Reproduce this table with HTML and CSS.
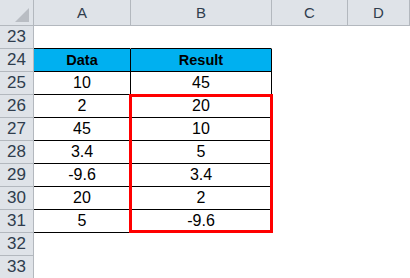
FILE: index.html
```html
<!DOCTYPE html>
<html>
<head>
<meta charset="utf-8">
<link rel="stylesheet" href="styles.css">
</head>
<body>
<div class="sheet">
  <div class="grid">
    <div class="hd corner"><span class="tri"></span></div>
    <div class="hd col">A</div>
    <div class="hd col">B</div>
    <div class="hd col">C</div>
    <div class="hd col">D</div>

    <div class="hd row">23</div>
    <div class="c above"></div><div class="c above"></div><div class="c"></div><div class="c"></div>

    <div class="hd row">24</div>
    <div class="c t th">Data</div><div class="c t th">Result</div><div class="c"></div><div class="c"></div>

    <div class="hd row">25</div>
    <div class="c t">10</div><div class="c t">45</div><div class="c"></div><div class="c"></div>

    <div class="hd row">26</div>
    <div class="c t">2</div><div class="c t">20</div><div class="c"></div><div class="c"></div>

    <div class="hd row">27</div>
    <div class="c t">45</div><div class="c t">10</div><div class="c"></div><div class="c"></div>

    <div class="hd row">28</div>
    <div class="c t">3.4</div><div class="c t">5</div><div class="c"></div><div class="c"></div>

    <div class="hd row">29</div>
    <div class="c t">-9.6</div><div class="c t">3.4</div><div class="c"></div><div class="c"></div>

    <div class="hd row">30</div>
    <div class="c t">20</div><div class="c t">2</div><div class="c"></div><div class="c"></div>

    <div class="hd row">31</div>
    <div class="c t">5</div><div class="c t">-9.6</div><div class="c"></div><div class="c"></div>

    <div class="hd row">32</div>
    <div class="c"></div><div class="c"></div><div class="c"></div><div class="c"></div>

    <div class="hd row">33</div>
    <div class="c"></div><div class="c"></div><div class="c"></div><div class="c"></div>
  </div>
  <div class="highlight"></div>
</div>
</body>
</html>
```
FILE: styles.css
```css
html, body {
  margin: 0;
  padding: 0;
  background: #fff;
  overflow: hidden;
}
.sheet {
  position: relative;
  width: 410px;
  height: 278px;
  overflow: hidden;
  font-family: "Liberation Sans", Arial, sans-serif;
  font-size: 16px;
  color: #000;
}
.grid {
  display: grid;
  grid-template-columns: 34px 97px 141px 76px 62px;
  grid-template-rows: 26px repeat(11, 23px);
}
.grid > div {
  box-sizing: border-box;
  display: flex;
  align-items: center;
  justify-content: center;
  border-right: 1px solid transparent;
  border-bottom: 1px solid transparent;
}
.hd {
  background: #dfe3e8;
  color: #2f3d4d;
}
.hd.row {
  font-size: 17px;
}
.hd.col {
  font-size: 15px;
}
.grid > .hd {
  border-right-color: #b3b8be;
  border-bottom-color: #b3b8be;
}
.corner {
  position: relative;
}
.tri {
  position: absolute;
  right: 4px;
  bottom: 3px;
  width: 0;
  height: 0;
  border-left: 14px solid transparent;
  border-bottom: 14px solid #b9bdc3;
}
.grid > .c.t {
  border-right-color: #000;
  border-bottom-color: #000;
}
.grid > .c.above {
  border-bottom-color: #000;
}
.th {
  background: #00b0f0;
  font-weight: bold;
  font-size: 14.5px;
}
.highlight {
  position: absolute;
  left: 129px;
  top: 94px;
  width: 144px;
  height: 139px;
  box-sizing: border-box;
  border: 3px solid #ff0000;
}
```
